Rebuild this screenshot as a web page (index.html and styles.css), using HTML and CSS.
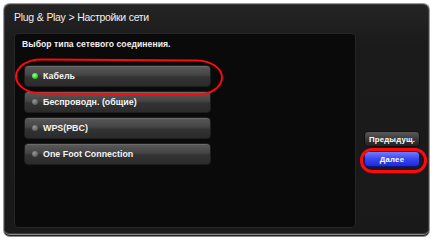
FILE: index.html
```html
<!DOCTYPE html>
<html>
<head>
<meta charset="utf-8">
<link rel="stylesheet" href="styles.css">
</head>
<body>
<div class="window">
  <div class="title">Plug &amp; Play &gt; Настройки сети</div>
  <div class="content">
    <div class="panel">
      <div class="subtitle">Выбор типа сетевого соединения.</div>
      <div class="options">
        <div class="option"><span class="dot on"></span>Кабель</div>
        <div class="option"><span class="dot"></span>Беспроводн. (общие)</div>
        <div class="option"><span class="dot"></span>WPS(PBC)</div>
        <div class="option"><span class="dot"></span>One Foot Connection</div>
      </div>
    </div>
    <div class="side">
      <div class="btn prev">Предыдущ.</div>
      <div class="btn next">Далее</div>
    </div>
  </div>
  <div class="mark mark-cable"></div>
  <div class="mark mark-next"></div>
</div>
</body>
</html>
```
FILE: styles.css
```css
html, body {
  margin: 0;
  padding: 0;
  background: #ffffff;
}
body {
  font-family: "Liberation Sans", Arial, sans-serif;
  width: 434px;
  height: 241px;
  overflow: hidden;
}
.window {
  position: relative;
  margin: 3px 0 0 3px;
  width: 425px;
  height: 230px;
  border: 1px solid #9a9a9a;
  border-bottom: 3px double #8a8a8a;
  border-radius: 7px;
  background: linear-gradient(#242424, #1b1b1b 40px, #191919);
  box-shadow: inset 0 0 0 1px #3a3a3a;
  box-sizing: content-box;
}
.title {
  height: 29px;
  line-height: 26px;
  padding-left: 10px;
  color: #f0f0f0;
  font-size: 10.5px;
  letter-spacing: -0.35px;
  word-spacing: 0.5px;
}
.content {
  display: flex;
  align-items: flex-start;
  padding-left: 10px;
}
.panel {
  width: 340px;
  height: 193px;
  background: #0a0a0a;
  border: 1px solid #262626;
  border-radius: 4px;
}
.subtitle {
  color: #f2f2f2;
  font-size: 8.6px;
  font-weight: bold;
  padding: 5px 0 0 7px;
  height: 31px;
  box-sizing: border-box;
  letter-spacing: 0.05px;
}
.options {
  display: flex;
  flex-direction: column;
  gap: 4px;
  padding-left: 9px;
}
.option {
  width: 185px;
  height: 20px;
  border-radius: 4px;
  border: 1px solid #1e1e1e;
  background: linear-gradient(#5a5a5a, #444 45%, #333 55%, #2b2b2b);
  box-shadow: inset 0 1px 0 #6a6a6a;
  display: flex;
  align-items: center;
  color: #f4f4f4;
  font-size: 8.9px;
  font-weight: bold;
}
.dot {
  width: 6px;
  height: 6px;
  border-radius: 50%;
  margin: 0 5px 0 7px;
  background: radial-gradient(circle at 40% 35%, #9a9a9a, #5c5c5c 70%);
}
.dot.on {
  background: radial-gradient(circle at 40% 35%, #a8ff9a, #22c21c 70%);
}
.side {
  display: flex;
  flex-direction: column;
  gap: 4px;
  padding: 98px 0 0 8px;
}
.btn {
  width: 56px;
  height: 16px;
  border-radius: 4px;
  color: #fff;
  font-size: 7.8px;
  font-weight: bold;
  display: flex;
  align-items: center;
  justify-content: center;
  letter-spacing: 0.2px;
}
.prev {
  background: linear-gradient(#5a5a5a, #3a3a3a 50%, #222);
  border: 1px solid #111;
  box-sizing: border-box;
}
.next {
  background: linear-gradient(#6f7cff, #3845f0 50%, #1e2bd6);
  border: 1px solid #101680;
  box-sizing: border-box;
}
.mark {
  position: absolute;
  border: 2.5px solid #ff0a0a;
  box-sizing: border-box;
}
.mark-cable {
  left: 11px;
  top: 55px;
  width: 208px;
  height: 36px;
  border-radius: 26px / 18px;
  transform: rotate(0.4deg);
}
.mark-next {
  left: 356px;
  top: 144px;
  width: 67px;
  height: 25px;
  border-width: 3px;
  border-radius: 12px;
}
```
